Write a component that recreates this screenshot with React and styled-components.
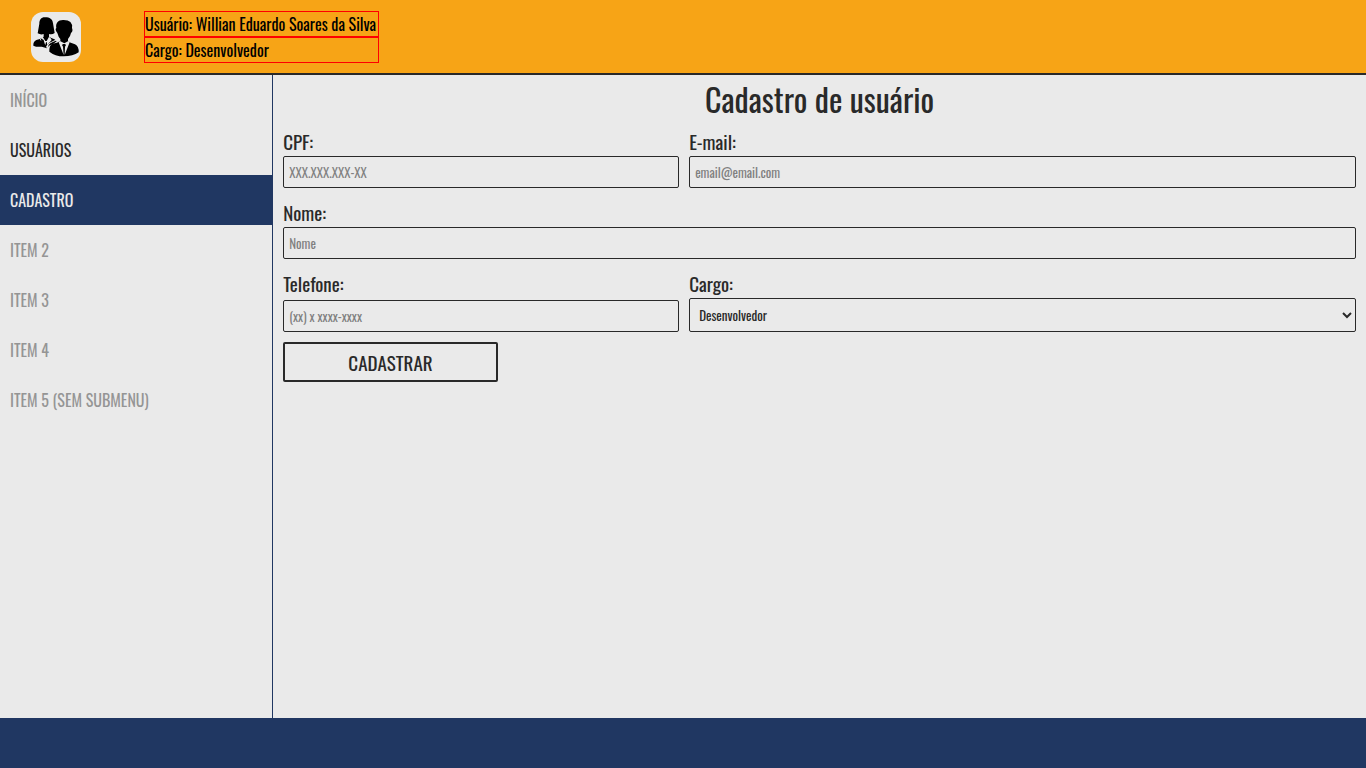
import React from "react";
import styled, { createGlobalStyle } from "styled-components";

const colors = {
  orange: "#f7a416",
  navy: "#203762",
  paper: "#eaeaea",
  ink: "#292929",
  muted: "#959595",
};

const GlobalStyle = createGlobalStyle`
  *, *::before, *::after { box-sizing: border-box; }
  body {
    margin: 0;
    background: ${colors.paper};
    color: ${colors.ink};
    font-family: Oswald, "Liberation Sans Narrow", "Liberation Sans", sans-serif;
    font-size: 16px;
    font-weight: 400;
  }
  input, select, button { font-family: inherit; font-weight: inherit; color: inherit; }
`;

const Page = styled.div`
  display: flex;
  flex-direction: column;
  min-height: 100vh;
`;

const Header = styled.header`
  display: flex;
  align-items: center;
  gap: 63px;
  height: 75px;
  padding: 0 31px;
  background: ${colors.orange};
  border-bottom: 2px solid ${colors.ink};
`;

const Avatar = styled.svg`
  width: 50px;
  height: 50px;
  flex: none;
  border-radius: 12px;
  background: ${colors.paper};
`;

const UserInfo = styled.div`
  min-width: 235px;
  color: #000;
`;

const UserLine = styled.p`
  margin: 0;
  border: 1px solid #f00;
  line-height: 24px;
  white-space: nowrap;
`;

const Body = styled.div`
  display: flex;
  flex: 1;
`;

const Sidebar = styled.nav`
  flex: 0 0 20%;
  border-right: 1px solid ${colors.navy};
`;

const MenuLink = styled.a`
  display: block;
  padding: 0 10px;
  line-height: 50px;
  text-decoration: none;
  text-transform: uppercase;
  color: ${({ $tone }) => ($tone === "active" ? colors.paper : $tone === "open" ? colors.ink : colors.muted)};
  background: ${({ $tone }) => ($tone === "active" ? colors.navy : "transparent")};
`;

const Main = styled.main`
  flex: 1;
  min-width: 0;
  padding: 0 10px;
`;

const Title = styled.h1`
  margin: 0 0 4px;
  font-size: 32px;
  font-weight: 400;
  line-height: 48px;
  text-align: center;
`;

const Form = styled.form`
  display: grid;
  grid-template-columns: 19fr 32fr;
  gap: 10px;
`;

const Field = styled.div`
  display: flex;
  flex-direction: column;
  justify-content: space-between;
  grid-column: ${({ $wide }) => ($wide ? "1 / -1" : "auto")};
`;

const Label = styled.label`
  font-size: 19px;
  line-height: 29px;
`;

const TextInput = styled.input`
  width: 100%;
  height: 32px;
  padding: 0 5px;
  border: 1px solid ${colors.ink};
  border-radius: 2px;
  background: transparent;
  font-size: 13px;
  &::placeholder { color: #808080; }
`;

const Select = styled.select`
  width: 100%;
  height: 34px;
  padding: 0 5px;
  border: 1px solid ${colors.ink};
  border-radius: 2px;
  background: transparent;
  font-size: 13px;
`;

const Submit = styled.button`
  grid-column: 1 / -1;
  width: 20%;
  height: 40px;
  padding: 0;
  border: 2px solid ${colors.ink};
  border-radius: 2px;
  background: transparent;
  font-size: 19px;
  text-transform: uppercase;
`;

const Footer = styled.footer`
  height: 50px;
  background: ${colors.navy};
`;

const menu = [
  { label: "Início" },
  { label: "Usuários", tone: "open" },
  { label: "Cadastro", tone: "active" },
  { label: "Item 2" },
  { label: "Item 3" },
  { label: "Item 4" },
  { label: "Item 5 (sem submenu)" },
];

const PeopleIcon = () => (
  <Avatar viewBox="0 0 150 150" role="img" aria-label="Usuários">
    <path d="M43 16C31 15 25 23 25 35L20 64Q29 69 38 66V74Q29 81 16 84Q6 89 7 101Q18 106 32 104L48 109L54 101Q67 98 77 88Q72 81 61 78L54 74V66Q63 69 71 63L66 34C65 21 56 16 43 16Z" />
    <path fill={colors.paper} d="M35 74L29 78L27 83L43 99L45 91H48L48 99L62 84L59 79L54 74L47 87H43Z" />
    <path d="M29 79L38 84L43 102L25 88L31 86Z" />
    <path fill={colors.paper} d="M80 84L64 91Q51 95 50 110L45 105Q48 94 62 89L78 81Z" />
    <path d="M98 24C82 23 73 33 76 48Q72 50 75 57L79 63Q82 75 88 81V87Q80 93 64 95Q54 100 55 119Q72 133 98 133Q126 133 143 121Q144 103 132 97Q117 93 111 88V81Q118 74 120 63Q127 58 123 48Q126 24 98 24Z" />
    <path fill={colors.paper} d="M87 87L83 91L98 129L96 104L93 99L96 96H102L105 99L102 104L101 129L116 91L112 87L100 94Z" />
  </Avatar>
);

export default function App() {
  return (
    <Page>
      <GlobalStyle />
      <Header>
        <PeopleIcon />
        <UserInfo>
          <UserLine>Usuário: Willian Eduardo Soares da Silva</UserLine>
          <UserLine>Cargo: Desenvolvedor</UserLine>
        </UserInfo>
      </Header>
      <Body>
        <Sidebar>
          {menu.map(({ label, tone }) => (
            <MenuLink key={label} href="#" $tone={tone}>{label}</MenuLink>
          ))}
        </Sidebar>
        <Main>
          <Title>Cadastro de usuário</Title>
          <Form onSubmit={(event) => event.preventDefault()}>
            <Field>
              <Label htmlFor="cpf">CPF:</Label>
              <TextInput id="cpf" placeholder="XXX.XXX.XXX-XX" />
            </Field>
            <Field>
              <Label htmlFor="email">E-mail:</Label>
              <TextInput id="email" type="email" placeholder="email@email.com" />
            </Field>
            <Field $wide>
              <Label htmlFor="nome">Nome:</Label>
              <TextInput id="nome" placeholder="Nome" />
            </Field>
            <Field>
              <Label htmlFor="telefone">Telefone:</Label>
              <TextInput id="telefone" type="tel" placeholder="(xx) x xxxx-xxxx" />
            </Field>
            <Field>
              <Label htmlFor="cargo">Cargo:</Label>
              <Select id="cargo" defaultValue="Desenvolvedor">
                <option>Desenvolvedor</option>
              </Select>
            </Field>
            <Submit type="submit">Cadastrar</Submit>
          </Form>
        </Main>
      </Body>
      <Footer />
    </Page>
  );
}
